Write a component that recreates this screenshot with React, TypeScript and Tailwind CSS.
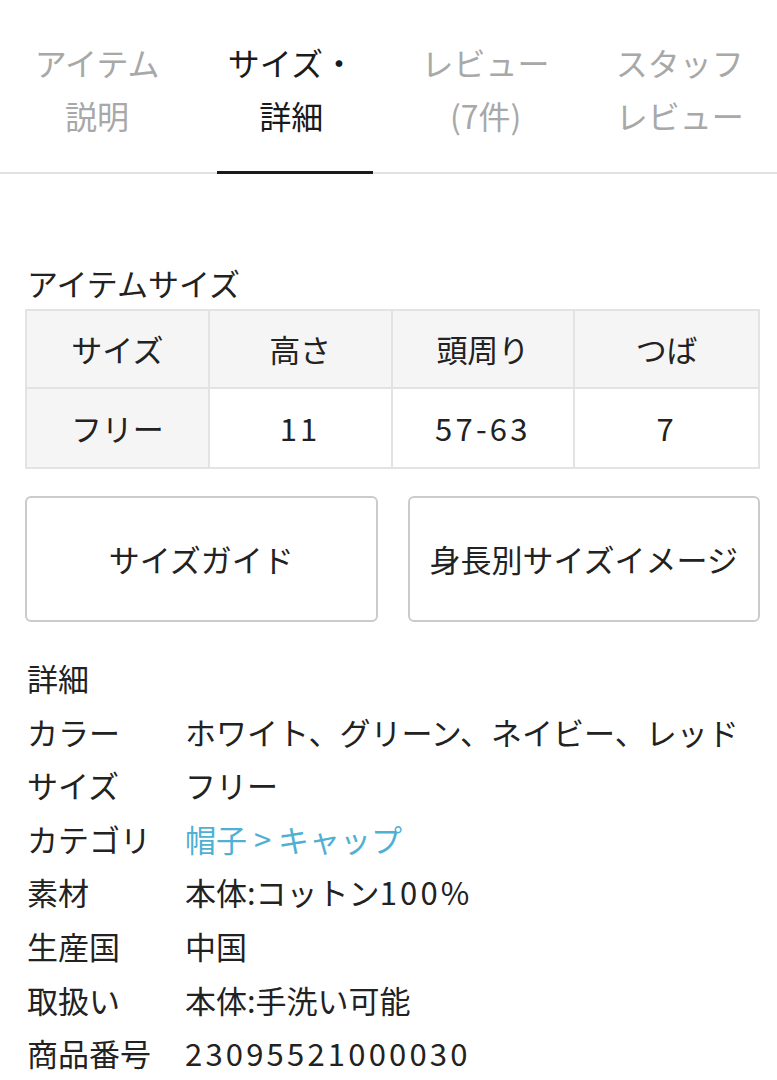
import React from "react";

const font = { fontFamily: '"Noto Sans CJK JP", "Noto Sans", sans-serif' };

const tabs = [
  { l1: "アイテム", l2: "説明", active: false },
  { l1: "サイズ・", l2: "詳細", active: true },
  { l1: "レビュー", l2: "(7件)", active: false },
  { l1: "スタッフ", l2: "レビュー", active: false },
];

function Txt({ s }: { s: string }) {
  // widen digit runs to match the reference's wider numerals
  const parts = s.split(/([0-9%\-]+)/);
  return (
    <>
      {parts.map((p, i) =>
        /^[0-9%\-]+$/.test(p) ? (
          <span key={i} className="tracking-[3.2px]">
            {p}
          </span>
        ) : (
          <span key={i}>{p}</span>
        )
      )}
    </>
  );
}

const details: [string, string, boolean?][] = [
  ["カラー", "ホワイト、グリーン、ネイビー、レッド"],
  ["サイズ", "フリー"],
  ["カテゴリ", "帽子 > キャップ", true],
  ["素材", "本体:コットン100%"],
  ["生産国", "中国"],
  ["取扱い", "本体:手洗い可能"],
  ["商品番号", "23095521000030"],
];

export default function App() {
  return (
    <div className="w-[777px] h-[1080px] bg-white text-[#222] overflow-hidden" style={font}>
      {/* Tabs */}
      <div className="flex border-b-2 border-[#e2e2e2]">
        {tabs.map((t, i) => (
          <div key={i} className="flex-1 flex flex-col items-center pt-[36px]">
            <div
              className={`text-[32px] leading-[53px] text-center ${
                t.active ? "text-[#1a1a1a]" : "text-[#a8a8a8]"
              }`}
            >
              <div>{t.l1}</div>
              <div>{t.l2}</div>
            </div>
            <div
              className={`mt-[29px] h-[3px] w-[156px] ml-[8px] -mb-[2px] ${
                t.active ? "bg-[#1a1a1a]" : "bg-transparent"
              }`}
            />
          </div>
        ))}
      </div>

      <div className="pl-[25px] pr-[17px]">
        {/* Item size */}
        <div className="mt-[86px] text-[31px] leading-[45px] pl-[2px]">アイテムサイズ</div>
        <div className="mt-[4px] grid grid-cols-4 border-2 border-[#e3e3e3] text-[31px]">
          {["サイズ", "高さ", "頭周り", "つば"].map((h, i) => (
            <div
              key={h}
              className={`h-[78px] flex items-center justify-center bg-[#f5f5f5] border-b-2 border-[#e3e3e3] ${
                i < 3 ? "border-r-2" : ""
              }`}
            >
              {h}
            </div>
          ))}
          {["フリー", "11", "57-63", "7"].map((v, i) => (
            <div
              key={i}
              className={`h-[78px] flex items-center justify-center border-[#e3e3e3] ${
                i === 0 ? "bg-[#f5f5f5]" : "bg-white"
              } ${i < 3 ? "border-r-2" : ""}`}
            >
              <Txt s={v} />
            </div>
          ))}
        </div>

        {/* Buttons */}
        <div className="mt-[27px] flex gap-[30px]">
          <div className="flex-1 h-[126px] rounded-[6px] border-2 border-[#cbcbcb] flex items-center justify-center text-[31px]">
            サイズガイド
          </div>
          <div className="flex-1 h-[126px] rounded-[6px] border-2 border-[#cbcbcb] flex items-center justify-center text-[31px]">
            身長別サイズイメージ
          </div>
        </div>

        {/* Details */}
        <div className="mt-[29px] pl-[2px] text-[31px] leading-[53.6px]">
          <div>詳細</div>
          {details.map(([k, v, link]) => (
            <div key={k} className="flex">
              <div className="w-[158px] shrink-0 whitespace-nowrap">{k}</div>
              <div className={`whitespace-nowrap ${link ? "text-[#4fb0d3]" : ""}`}>
                <Txt s={v} />
              </div>
            </div>
          ))}
        </div>
      </div>
    </div>
  );
}
